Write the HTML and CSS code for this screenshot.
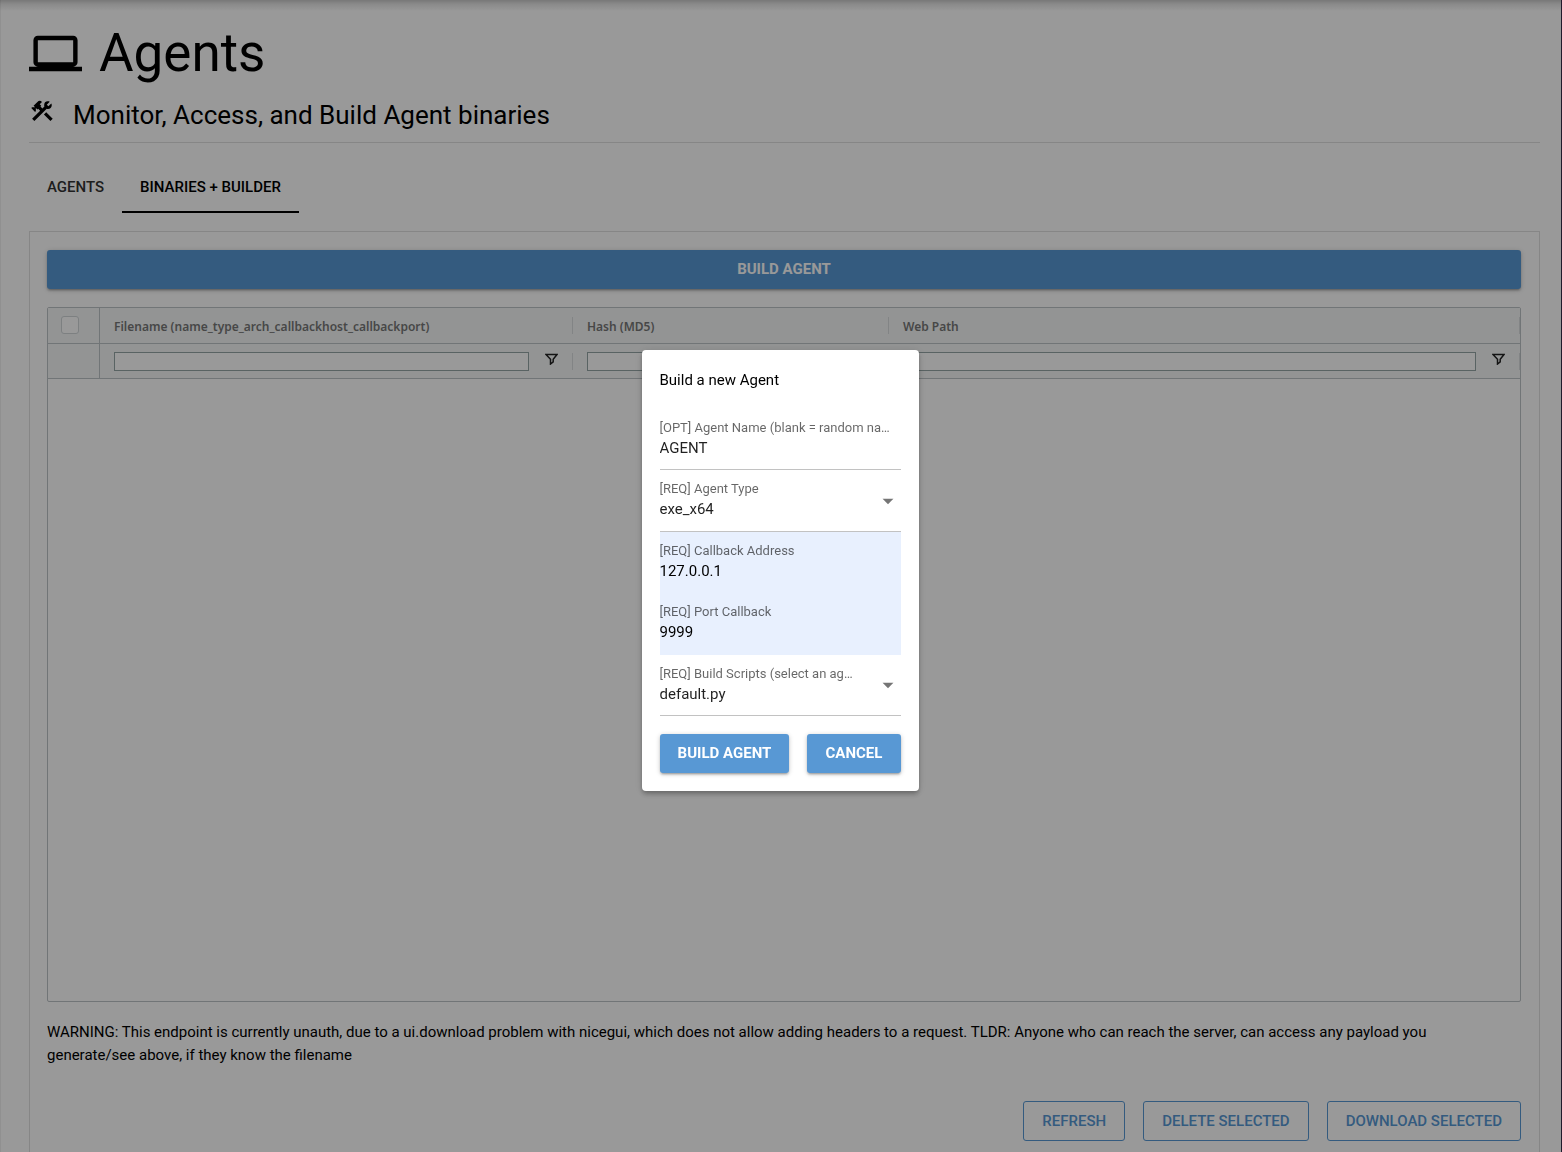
FILE: index.html
```html
<!DOCTYPE html>
<html lang="en">
<head>
<meta charset="utf-8">
<title>Agents</title>
<link rel="stylesheet" href="styles.css">
</head>
<body>
<main class="page">
  <h1 class="title">
    <svg class="title-icon" viewBox="0 0 24 24" aria-hidden="true"><path d="M20 18c1.1 0 1.99-.9 1.99-2L22 6c0-1.1-.9-2-2-2H4c-1.1 0-2 .9-2 2v10c0 1.1.9 2 2 2H0v2h24v-2h-4zM4 6h16v10H4V6z"/></svg>
    Agents
  </h1>
  <p class="subtitle">
    <svg class="subtitle-icon" viewBox="0 0 24 24" aria-hidden="true"><path d="M13.78 15.3l6 6 2.11-2.16-6-6zm3.72-5.2c-.39 0-.81-.05-1.14-.19L4.97 21.25l-2.11-2.11 7.41-7.4L8.5 9.96l-.72.7-1.45-1.41v2.86l-.7.7-3.52-3.56.7-.7h2.81l-1.4-1.41 3.56-3.56a2.976 2.976 0 0 1 4.22 0L9.89 5.74l1.41 1.4-.71.71 1.79 1.78 1.82-1.88c-.14-.33-.2-.75-.2-1.12a3.49 3.49 0 0 1 3.5-3.52c.59 0 1.11.14 1.58.42L16.41 6.2l1.5 1.5 2.67-2.67c.28.47.42.97.42 1.6 0 1.92-1.55 3.47-3.5 3.47z"/></svg>
    Monitor, Access, and Build Agent binaries
  </p>
  <nav class="tabs">
    <button class="tab" type="button">AGENTS</button>
    <button class="tab tab-active" type="button">BINARIES + BUILDER</button>
  </nav>
  <section class="panel">
    <button class="btn" type="button">BUILD AGENT</button>
    <div class="grid">
      <table class="grid-table">
        <colgroup><col class="col-select"><col class="col-name"><col class="col-hash"><col></colgroup>
        <thead>
          <tr class="head-row">
            <th class="select-cell"><input class="check" type="checkbox" aria-label="Select all"></th>
            <th>Filename (name_type_arch_callbackhost_callbackport)</th>
            <th>Hash (MD5)</th>
            <th>Web Path</th>
          </tr>
          <tr class="filter-row">
            <td class="select-cell"></td>
            <td><div class="filter"><input class="filter-input" type="text" aria-label="Filename filter"><svg class="filter-icon" viewBox="0 0 13 12" aria-hidden="true"><path d="M1 1.500h11L8.200 6.200v2.600L5.500 11V6.200L1 1.500z"/></svg></div></td>
            <td><div class="filter"><input class="filter-input" type="text" aria-label="Hash filter"><svg class="filter-icon" viewBox="0 0 13 12" aria-hidden="true"><path d="M1 1.500h11L8.200 6.200v2.600L5.500 11V6.200L1 1.500z"/></svg></div></td>
            <td><div class="filter"><input class="filter-input" type="text" aria-label="Web path filter"><svg class="filter-icon" viewBox="0 0 13 12" aria-hidden="true"><path d="M1 1.500h11L8.200 6.200v2.600L5.500 11V6.200L1 1.500z"/></svg></div></td>
          </tr>
        </thead>
      </table>
    </div>
    <p class="warning">WARNING: This endpoint is currently unauth, due to a ui.download problem with nicegui, which does not allow adding headers to a request. TLDR: Anyone who can reach the server, can access any payload you generate/see above, if they know the filename</p>
    <div class="actions">
      <button class="btn-outline" type="button">REFRESH</button>
      <button class="btn-outline" type="button">DELETE SELECTED</button>
      <button class="btn-outline" type="button">DOWNLOAD SELECTED</button>
    </div>
  </section>
</main>
<div class="backdrop">
  <form class="dialog" role="dialog" aria-labelledby="dialog-title">
    <h2 class="dialog-title" id="dialog-title">Build a new Agent</h2>
    <div class="fields">
      <div class="field">
        <label class="label" for="name">[OPT] Agent Name (blank = random na…</label>
        <input class="control" id="name" type="text" value="AGENT">
      </div>
      <div class="field field-select">
        <label class="label" for="type">[REQ] Agent Type</label>
        <select class="control" id="type"><option>exe_x64</option></select>
        <svg class="arrow" viewBox="0 0 24 24" aria-hidden="true"><path d="M7 10l5 5 5-5z"/></svg>
      </div>
      <div class="field field-filled">
        <label class="label" for="address">[REQ] Callback Address</label>
        <input class="control" id="address" type="text" value="127.0.0.1">
      </div>
      <div class="field field-filled">
        <label class="label" for="port">[REQ] Port Callback</label>
        <input class="control" id="port" type="text" value="9999">
      </div>
      <div class="field field-select">
        <label class="label" for="script">[REQ] Build Scripts (select an ag…</label>
        <select class="control" id="script"><option>default.py</option></select>
        <svg class="arrow" viewBox="0 0 24 24" aria-hidden="true"><path d="M7 10l5 5 5-5z"/></svg>
      </div>
    </div>
    <div class="dialog-actions">
      <button class="btn" type="button">BUILD AGENT</button>
      <button class="btn" type="button">CANCEL</button>
    </div>
  </form>
</div>
</body>
</html>
```
FILE: styles.css
```css
*, *::before, *::after { box-sizing: border-box; }

body {
  margin: 0;
  background: #fff;
  color: #000;
  font: 15px/23px Roboto, "Liberation Sans", sans-serif;
}

h1, h2, p { margin: 0; font-weight: 400; }

button, input, select { font: inherit; color: inherit; margin: 0; }

.page {
  display: flex;
  flex-direction: column;
  height: 100vh;
  padding: 27px 22px 0 29px;
  background: linear-gradient(#c8c8c8, #e6e6e6 4px, #fff 11px);
}

.title {
  display: flex;
  align-items: center;
  gap: 17px;
  font-size: 53px;
  line-height: 53px;
}

.title-icon { width: 53px; height: 53px; }

.subtitle {
  display: flex;
  align-items: flex-start;
  gap: 18px;
  margin-top: 18px;
  padding-bottom: 9px;
  border-bottom: 1px solid #e0e0e0;
  font-size: 26px;
  line-height: 35px;
}

.subtitle-icon { width: 26px; height: 26px; }

.tabs { display: flex; margin-top: 18px; }

.tab {
  height: 52px;
  padding: 3px 18px 0;
  border: 0;
  border-bottom: 2px solid transparent;
  background: none;
  font-weight: 500;
  color: #333;
}

.tab-active { border-color: #000; color: #000; }

.panel {
  display: flex;
  flex: 1;
  flex-direction: column;
  gap: 18px;
  margin-top: 18px;
  padding: 18px 18px 11px 17px;
  border: 1px solid #e0e0e0;
  border-bottom: 0;
}

.btn {
  height: 39px;
  padding: 0 17px;
  border: 0;
  border-radius: 3px;
  background: #5898d4;
  box-shadow: 0 1px 5px #00000033, 0 2px 2px #00000024, 0 3px 1px -2px #0000001f;
  color: #fff;
  font-weight: 700;
}

.grid {
  flex: 1;
  min-height: 200px;
  border: 1px solid #bdc3c7;
  border-radius: 2px;
}

.grid-table {
  width: 100%;
  table-layout: fixed;
  border-collapse: separate;
  border-spacing: 0;
  font-family: "Noto Sans", sans-serif;
  font-size: 12px;
}

.col-select { width: 52px; }
.col-name { width: 473px; }
.col-hash { width: 316px; }

.grid-table th,
.grid-table td {
  padding: 0 0 0 14px;
  border-bottom: 1px solid #bdc3c7;
  background: linear-gradient(#d9dcde, #d9dcde) right center / 1px 17px no-repeat #f5f7f7;
  color: #777;
  font-weight: 600;
  text-align: left;
}

.grid-table th { padding-top: 2px; }

.grid-table .select-cell {
  padding: 0 13px 2px;
  border-right: 1px solid #bdc3c7;
  background: #f5f7f7;
}

.head-row { height: 36px; }
.filter-row { height: 35px; }

.check {
  display: block;
  width: 18px;
  height: 18px;
  border: 1px solid #d0d5d8;
  border-radius: 3px;
  background: #fff;
  appearance: none;
}

.filter {
  display: flex;
  align-items: center;
  gap: 16px;
  padding-right: 15px;
}

.filter-input {
  flex: 1;
  min-width: 0;
  height: 19px;
  border: 1px solid #95a5a6;
  background: #fff;
}

.filter-icon {
  width: 13px;
  height: 12px;
  margin-bottom: 4px;
  fill: none;
  stroke: #222;
  stroke-width: 1.500;
}

.warning { margin-top: 1px; padding-right: 18px; }

.actions {
  display: flex;
  justify-content: flex-end;
  gap: 18px;
  margin-top: 16px;
}

.btn-outline {
  height: 40px;
  padding: 0 18px;
  border: 1px solid #5898d4;
  border-radius: 3px;
  background: none;
  color: #5898d4;
  font-weight: 500;
}

.backdrop {
  position: fixed;
  inset: 0;
  display: flex;
  align-items: center;
  justify-content: center;
  padding: 0 2px 11px 0;
  border-right: 1px solid #211b2c;
  border-left: 1px solid #0000000f;
  background: #0006;
}

.dialog {
  display: flex;
  flex-direction: column;
  gap: 18px;
  width: 277px;
  padding: 19px 18px 18px;
  border-radius: 4px;
  background: #fff;
  box-shadow: 0 2px 4px -1px #00000033, 0 4px 5px #00000024, 0 1px 10px #0000001f;
}

.dialog-title { font-size: 15px; line-height: 22px; }

.fields {
  display: grid;
  grid-auto-rows: 1fr;
  height: 307px;
}

.field {
  display: grid;
  grid-template-rows: 18px 23px;
  align-content: start;
  padding-top: 10px;
  border-bottom: 1px solid #c2c2c2;
}

.field-select { grid-template-columns: 1fr 26px; }

.field-filled { border-color: #e8f0fe; background: #e8f0fe; }

.label {
  overflow: hidden;
  color: #0009;
  font-size: 13px;
  line-height: 18px;
  white-space: nowrap;
}

.control {
  grid-row: 2;
  grid-column: 1;
  width: 100%;
  min-width: 0;
  padding: 0;
  border: 0;
  background: none;
  color: #000000de;
  appearance: none;
}

.field-filled .control { color: #000; }

.arrow {
  grid-row: 1 / 3;
  grid-column: 2;
  align-self: center;
  width: 26px;
  height: 26px;
  fill: #757575;
}

.dialog-actions { display: flex; gap: 18px; }

.dialog-actions .btn { flex: 1 0 auto; }
```
